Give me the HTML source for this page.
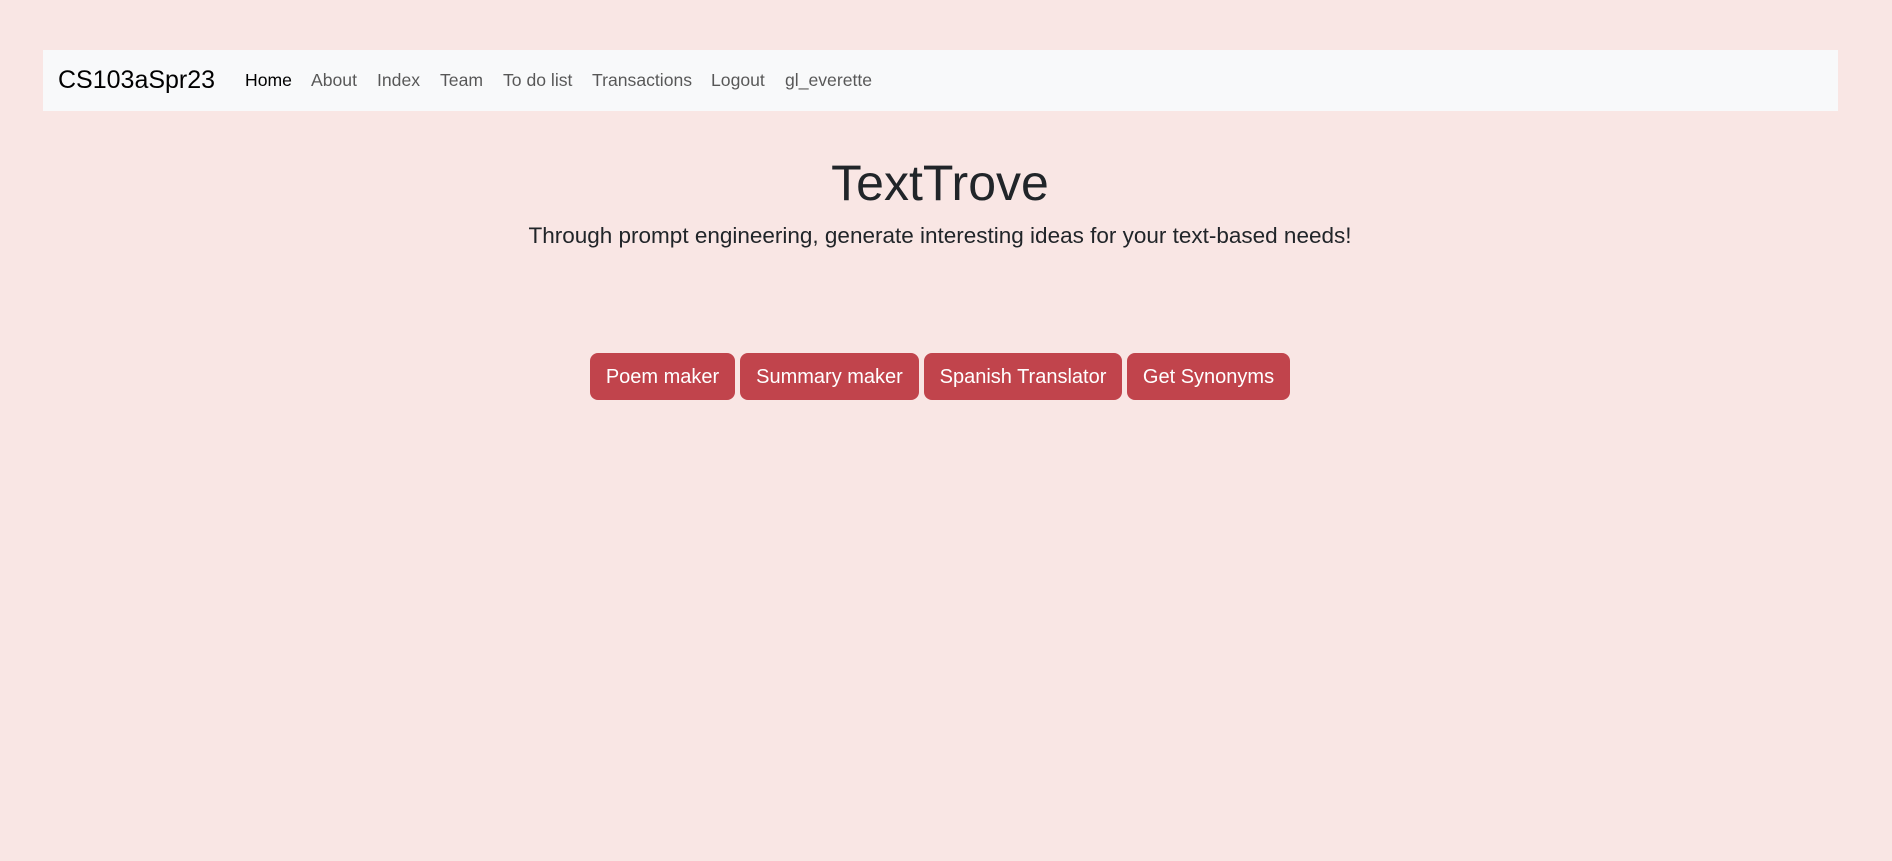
<!DOCTYPE html>
<html lang="en">
<head>
<meta charset="utf-8">
<title>TextTrove</title>
<style>
html,body{margin:0;padding:0;width:1892px;height:861px;overflow:hidden;background:#f9e6e4;font-family:"Liberation Sans",Arial,sans-serif;color:#212529}
nav{position:absolute;left:43px;top:50px;width:1795px;height:61px;background:#f8f9fa}
a{text-decoration:none;position:absolute;white-space:nowrap}
.brand{left:15px;top:15px;font-size:25px;line-height:31px;color:#000}
.l{top:15px;font-size:17.6px;line-height:31px;color:rgba(0,0,0,.65)}
.h{position:absolute;left:0;width:1880px;text-align:center;white-space:nowrap;margin:0;font-weight:400}
h1.h{top:151px;font-size:50px;line-height:64px}
p.h{top:219px;font-size:22.5px;line-height:34px}
.b{position:absolute;top:353px;height:47px;background:#c1444c;color:#fff;border-radius:8px;font-size:20px;line-height:49px;text-align:center;white-space:nowrap}
</style>
</head>
<body>
<nav>
<a class="brand" href="#">CS103aSpr23</a>
<a class="l" style="left:202px;color:#000" href="#">Home</a>
<a class="l" style="left:268px" href="#">About</a>
<a class="l" style="left:334px" href="#">Index</a>
<a class="l" style="left:397px" href="#">Team</a>
<a class="l" style="left:460px" href="#">To do list</a>
<a class="l" style="left:549px" href="#">Transactions</a>
<a class="l" style="left:668px" href="#">Logout</a>
<a class="l" style="left:742px" href="#">gl_everette</a>
</nav>
<h1 class="h">TextTrove</h1>
<p class="h">Through prompt engineering, generate interesting ideas for your text-based needs!</p>
<div class="b" style="left:590px;width:145px">Poem maker</div>
<div class="b" style="left:740px;width:179px">Summary maker</div>
<div class="b" style="left:924px;width:198px">Spanish Translator</div>
<div class="b" style="left:1127px;width:163px">Get Synonyms</div>
</body>
</html>
